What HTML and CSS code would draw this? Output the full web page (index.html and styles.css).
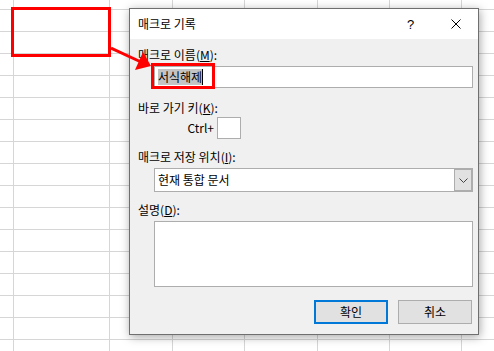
FILE: index.html
```html
<!DOCTYPE html>
<html>
	<head>
		<meta charset="UTF-8">
		<title>매크로 기록</title>
		<link rel="stylesheet" href="styles.css">
	</head>
	<body>
		<div class="sheet">
			<div class="mark_cell"></div>
			<div class="dialog">
				<div class="title_bar">
					<span class="title">매크로 기록</span>
					<span class="title_btn">?</span>
					<span class="title_btn">
						<svg width="10" height="10" viewBox="0 0 10 10">
							<path d="M0.5 0.5 L9.5 9.5 M9.5 0.5 L0.5 9.5" stroke="#000" stroke-width="1"/>
						</svg>
					</span>
				</div>
				<div class="dlg_body">
					<div class="label">매크로 이름(<u>M</u>):</div>
					<div class="field name_field"><span class="sel">서식해제</span><span class="caret"></span></div>
					<div class="label gap">바로 가기 키(<u>K</u>):</div>
					<div class="ctrl_row">
						<span class="ctrl_label">Ctrl+</span>
						<span class="key_box"></span>
					</div>
					<div class="label gap">매크로 저장 위치(<u>I</u>):</div>
					<div class="combo">
						<span class="combo_text">현재 통합 문서</span>
						<span class="combo_btn">
							<svg width="9" height="5" viewBox="0 0 9 5">
								<path d="M0.5 0.5 L4.5 4.5 L8.5 0.5" fill="none" stroke="#444" stroke-width="1"/>
							</svg>
						</span>
					</div>
					<div class="label gap">설명(<u>D</u>):</div>
					<div class="field desc_field"></div>
					<div class="btn_row">
						<span class="btn btn_ok">확인</span>
						<span class="btn">취소</span>
					</div>
				</div>
			</div>
			<svg class="mark_arrow" width="60" height="40" viewBox="0 0 60 40">
				<line x1="0" y1="13" x2="30" y2="27" stroke="#f00" stroke-width="3"/>
				<polygon points="32,17 24,35 40,31" fill="#f00"/>
			</svg>
			<div class="mark_name"></div>
		</div>
	</body>
</html>
```

FILE: styles.css
```css
html,body{margin: 0; padding: 0;}
body{
	width: 494px;
	height: 351px;
	overflow: hidden;
	background: #fff;
	font-family: "Noto Sans CJK KR", "Liberation Sans", sans-serif;
	font-size: 12px;
	color: #000;
}
.sheet{
	position: relative;
	width: 494px;
	height: 351px;
	background-image:
		linear-gradient(to right,
			transparent 13px, #d6d6d6 13px 14px,
			transparent 14px 109px, #d6d6d6 109px 110px,
			transparent 110px 172px, #d6d6d6 172px 173px,
			transparent 173px 244px, #d6d6d6 244px 245px,
			transparent 245px 317px, #d6d6d6 317px 318px,
			transparent 318px 389px, #d6d6d6 389px 390px,
			transparent 390px 461px, #d6d6d6 461px 462px,
			transparent 462px),
		repeating-linear-gradient(to bottom, #d6d6d6 0 1px, transparent 1px 22px);
	background-position: 0 0, 0 9px;
}
.mark_cell{
	position: absolute;
	left: 11px;
	top: 7px;
	width: 94px;
	height: 44px;
	border: 3px solid #f00;
}
.mark_arrow{
	position: absolute;
	left: 111px;
	top: 35px;
}
.mark_name{
	position: absolute;
	left: 151px;
	top: 63px;
	width: 58px;
	height: 20px;
	border: 3px solid #f00;
}
.dialog{
	position: absolute;
	left: 129px;
	top: 8px;
	width: 348px;
	height: 325px;
	border: 1px solid #6f6f6f;
	background: #f0f0f0;
	box-shadow: 1px 2px 9px rgba(0,0,0,0.35);
}
.title_bar{
	height: 30px;
	background: #fff;
	display: flex;
	align-items: center;
}
.title{
	flex: 1;
	padding-left: 8px;
	line-height: 16px;
}
.title_btn{
	width: 45px;
	height: 30px;
	display: flex;
	align-items: center;
	justify-content: center;
	font-family: "Liberation Sans", sans-serif;
	font-size: 13px;
}
.dlg_body{
	padding: 8px 5px 0 8px;
	display: flex;
	flex-direction: column;
}
.label{
	line-height: 16px;
	height: 16px;
}
.label.gap{
	margin-top: 12px;
}
.field{
	box-sizing: border-box;
	margin-left: 16px;
	background: #fff;
	border: 1px solid #adadad;
}
.name_field{
	height: 22px;
	margin-top: 3px;
	padding: 2px 0 0 3px;
	display: flex;
	align-items: flex-start;
}
.sel{
	background: #c4c4c4;
	line-height: 16px;
	height: 16px;
}
.caret{
	width: 1px;
	height: 16px;
	background: #000;
}
.ctrl_row{
	display: flex;
	align-items: center;
	margin-top: 1px;
}
.ctrl_label{
	width: 76px;
	text-align: right;
	line-height: 16px;
}
.key_box{
	box-sizing: border-box;
	width: 24px;
	height: 22px;
	margin-left: 3px;
	background: #fff;
	border: 1px solid #adadad;
}
.ctrl_row + .label.gap{
	margin-top: 10px;
}
.combo{
	box-sizing: border-box;
	height: 24px;
	margin: 3px 0 0 16px;
	background: #fff;
	border: 1px solid #adadad;
	display: flex;
	align-items: center;
}
.combo_text{
	flex: 1;
	padding-left: 3px;
	line-height: 16px;
}
.combo_btn{
	box-sizing: border-box;
	width: 18px;
	height: 22px;
	background: #e1e1e1;
	border: 1px solid #adadad;
	display: flex;
	align-items: center;
	justify-content: center;
}
.combo + .label.gap{
	margin-top: 10px;
}
.desc_field{
	height: 66px;
	margin-top: 3px;
}
.btn_row{
	display: flex;
	justify-content: flex-end;
	gap: 10px;
	margin-top: 13px;
	padding-right: 1px;
}
.btn{
	box-sizing: border-box;
	width: 74px;
	height: 24px;
	background: #e1e1e1;
	border: 1px solid #adadad;
	display: flex;
	align-items: center;
	justify-content: center;
	line-height: 16px;
}
.btn_ok{
	border: 2px solid #0078d7;
}
```
